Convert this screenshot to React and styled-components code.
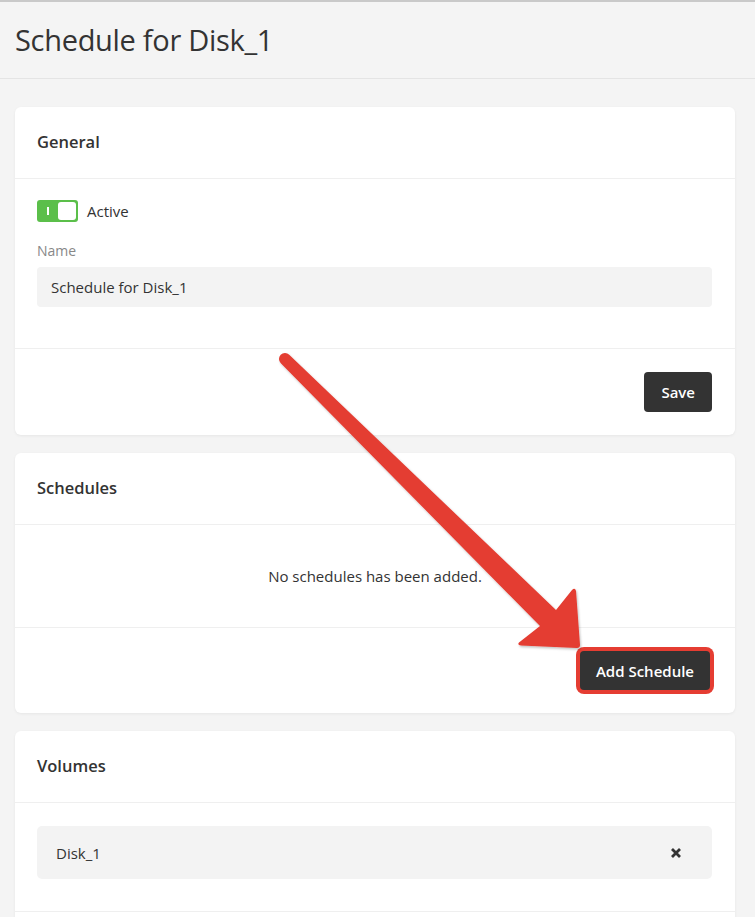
import React from "react";
import styled, { createGlobalStyle } from "styled-components";

const Global = createGlobalStyle`
  html, body { margin: 0; padding: 0; }
  body {
    background: #f4f4f4;
    font-family: "Open Sans", "Noto Sans", sans-serif;
    color: #333;
    overflow: hidden;
  }
`;

const Page = styled.div`
  position: relative;
  width: 755px;
  min-height: 917px;
  border-top: 2px solid #c9c9c9;
  box-sizing: border-box;
`;

const Header = styled.header`
  height: 76px;
  border-bottom: 1px solid #e4e4e4;
  display: flex;
  align-items: center;
  padding: 0 15px;
`;

const Title = styled.h1`
  margin: 0;
  font-size: 29px;
  font-weight: 400;
  color: #333;
  letter-spacing: -0.3px;
  padding-bottom: 2px;
`;

const Content = styled.main`
  padding: 28px 20px 0 15px;
  display: flex;
  flex-direction: column;
  gap: 18px;
`;

const Card = styled.section`
  background: #fff;
  border-radius: 6px;
  box-shadow: 0 1px 3px rgba(0, 0, 0, 0.06);
  overflow: hidden;
`;

const CardHeader = styled.div`
  height: 72px;
  box-sizing: border-box;
  display: flex;
  align-items: center;
  padding: 0 22px;
  border-bottom: 1px solid #efefef;
`;

const CardTitle = styled.h2`
  margin: 0;
  font-size: 16.5px;
  font-weight: 600;
  color: #333;
  padding-bottom: 2px;
`;

const CardBody = styled.div`
  padding: ${(p) => p.$pad || "22px"};
  border-bottom: ${(p) => (p.$noBorder ? "none" : "1px solid #efefef")};
  display: flex;
  flex-direction: column;
  align-items: ${(p) => (p.$center ? "center" : "stretch")};
  justify-content: center;
  min-height: ${(p) => p.$minH || "auto"};
  box-sizing: border-box;
`;

const CardFooter = styled.div`
  height: ${(p) => p.$h || "86px"};
  box-sizing: border-box;
  display: flex;
  justify-content: flex-end;
  align-items: center;
  padding: 0 ${(p) => p.$pr || "23px"} 0 22px;
`;

const ToggleRow = styled.label`
  display: flex;
  align-items: center;
  gap: 9px;
  font-size: 15px;
  color: #333;
  height: 22px;
`;

const Switch = styled.span`
  position: relative;
  width: 41px;
  height: 22px;
  border-radius: 3px;
  background: #5bbf4a;
  box-sizing: border-box;
  display: flex;
  align-items: center;
  justify-content: flex-end;
  padding: 2px;
  &::before {
    content: "";
    position: absolute;
    left: 10px;
    top: 7px;
    width: 1.5px;
    height: 8px;
    background: #fff;
  }
`;

const Knob = styled.span`
  width: 18px;
  height: 18px;
  border-radius: 3px;
  background: #fff;
`;

const Label = styled.div`
  margin-top: 20px;
  font-size: 14px;
  color: #888;
  line-height: 18px;
`;

const Input = styled.div`
  margin-top: 7px;
  height: 40px;
  border-radius: 4px;
  background: #f3f3f3;
  display: flex;
  align-items: center;
  padding: 0 14px;
  font-size: 15px;
  color: #333;
`;

const Button = styled.button`
  height: ${(p) => (p.$highlight ? "39px" : "40px")};
  padding: 0 ${(p) => p.$px || "17px"};
  border: none;
  border-radius: 4px;
  background: #333;
  color: #fff;
  font-family: inherit;
  font-size: 15px;
  font-weight: 600;
  cursor: pointer;
  box-shadow: ${(p) => (p.$highlight ? "0 0 0 4px #e53d32" : "none")};
`;

const EmptyText = styled.p`
  margin: 0;
  font-size: 15px;
  color: #333;
`;

const VolumeRow = styled.div`
  height: 53px;
  border-radius: 5px;
  background: #f3f3f3;
  display: flex;
  align-items: center;
  justify-content: space-between;
  padding: 0 30px 0 19px;
  font-size: 15px;
  color: #333;
`;

const IconButton = styled.span`
  display: flex;
  align-items: center;
`;

const Overlay = styled.svg`
  position: absolute;
  left: 0;
  top: 0;
  pointer-events: none;
`;

function Arrow() {
  return (
    <Overlay width="755" height="917" viewBox="0 0 755 917">
      <defs>
        <filter id="sh" x="-10%" y="-10%" width="120%" height="120%">
          <feDropShadow dx="1" dy="1.5" stdDeviation="1.2" floodColor="#000" floodOpacity="0.25" />
        </filter>
      </defs>
      <path
        filter="url(#sh)"
        fill="#e43c31"
        d="M280.8,361.3 L540,624 L519,640.5 Q517,643 521,643.5 L577,646 Q580,646 580,643 L576,589 Q575,585 572,588 L556,608 L289.2,352.7 A6,6 0 0 0 280.8,361.3 Z"
      />
    </Overlay>
  );
}

export default function App() {
  return (
    <Page>
      <Global />
      <Header>
        <Title>Schedule for Disk_1</Title>
      </Header>
      <Content>
        <Card>
          <CardHeader>
            <CardTitle>General</CardTitle>
          </CardHeader>
          <CardBody $pad="21px 23px 41px 22px">
            <ToggleRow>
              <Switch>
                <Knob />
              </Switch>
              Active
            </ToggleRow>
            <Label>Name</Label>
            <Input>Schedule for Disk_1</Input>
          </CardBody>
          <CardFooter>
            <Button>Save</Button>
          </CardFooter>
        </Card>

        <Card>
          <CardHeader>
            <CardTitle>Schedules</CardTitle>
          </CardHeader>
          <CardBody $center $minH="103px" $pad="0 22px">
            <EmptyText>No schedules has been added.</EmptyText>
          </CardBody>
          <CardFooter $h="85px" $pr="25px">
            <Button $highlight $px="16px">Add Schedule</Button>
          </CardFooter>
        </Card>

        <Card>
          <CardHeader>
            <CardTitle>Volumes</CardTitle>
          </CardHeader>
          <CardBody $pad="23px 23px 32px 22px">
            <VolumeRow>
              Disk_1
              <IconButton>
                <svg width="12" height="12" viewBox="0 0 12 12">
                  <path d="M2 2 L10 10 M10 2 L2 10" stroke="#333" strokeWidth="2.8" strokeLinecap="butt" />
                </svg>
              </IconButton>
            </VolumeRow>
          </CardBody>
          <CardFooter $h="40px" />
        </Card>
      </Content>
      <Arrow />
    </Page>
  );
}
